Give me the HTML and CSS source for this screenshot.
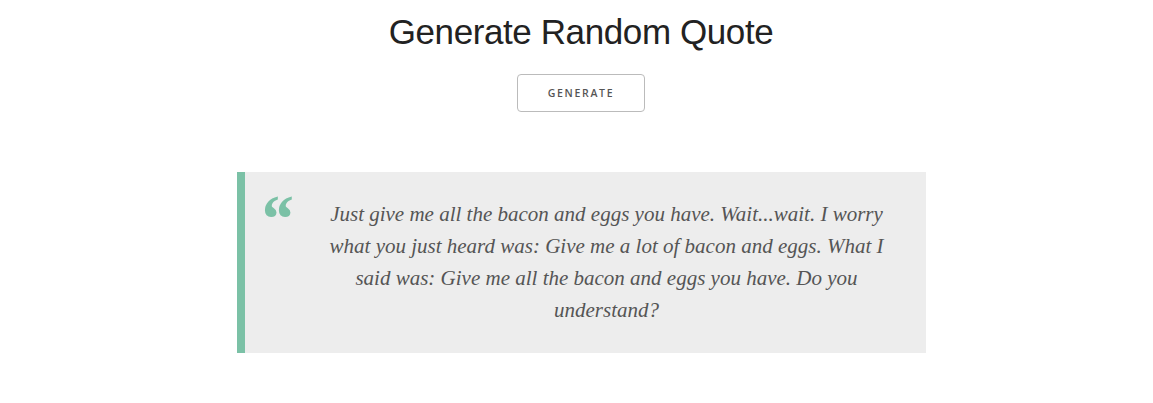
FILE: index.html
```html
<!DOCTYPE html>
<html>
<head>
<meta charset="utf-8">
<link rel="stylesheet" href="styles.css">
</head>
<body>
<div class="page">
  <h1 class="title">Generate Random Quote</h1>
  <button class="btn">GENERATE</button>
  <blockquote class="quote">
    <span class="mark">&ldquo;</span>
    <p class="text">Just give me all the bacon and eggs you have. Wait...wait. I worry what you just heard was: Give me a lot of bacon and eggs. What I said was: Give me all the bacon and eggs you have. Do you understand?</p>
  </blockquote>
</div>
</body>
</html>
```
FILE: styles.css
```css
html, body { margin: 0; padding: 0; background: #fff; }
.page {
  display: flex;
  flex-direction: column;
  align-items: center;
  padding-top: 12px;
  padding-left: 9px;
}
.title {
  margin: 0;
  font-family: "Liberation Sans", Arial, sans-serif;
  font-weight: 400;
  font-size: 35px;
  line-height: 40px;
  letter-spacing: -0.4px;
  color: #222;
}
.btn {
  margin-top: 22px;
  width: 128px;
  height: 38px;
  background: #fff;
  border: 1px solid #bbb;
  border-radius: 4px;
  font-family: "Open Sans", Arial, sans-serif;
  font-size: 10.5px;
  font-weight: 600;
  letter-spacing: 1.7px;
  color: #555;
  padding: 0;
}
.quote {
  position: relative;
  margin: 60px 0 0 0;
  box-sizing: content-box;
  background: #ededed;
  border-left: 8px solid #7bc1a6;
  padding: 26px 29px 27px 72px;
  width: 580px;
}
.mark {
  position: absolute;
  left: 14px;
  top: 13px;
  font-family: "Liberation Serif", serif;
  font-weight: 700;
  font-style: italic;
  font-size: 68px;
  line-height: 68px;
  color: #7bc1a6;
}
.text {
  margin: 0;
  text-align: center;
  font-family: "Liberation Serif", "Times New Roman", serif;
  font-style: italic;
  font-size: 21px;
  line-height: 32px;
  color: #555;
}
```
